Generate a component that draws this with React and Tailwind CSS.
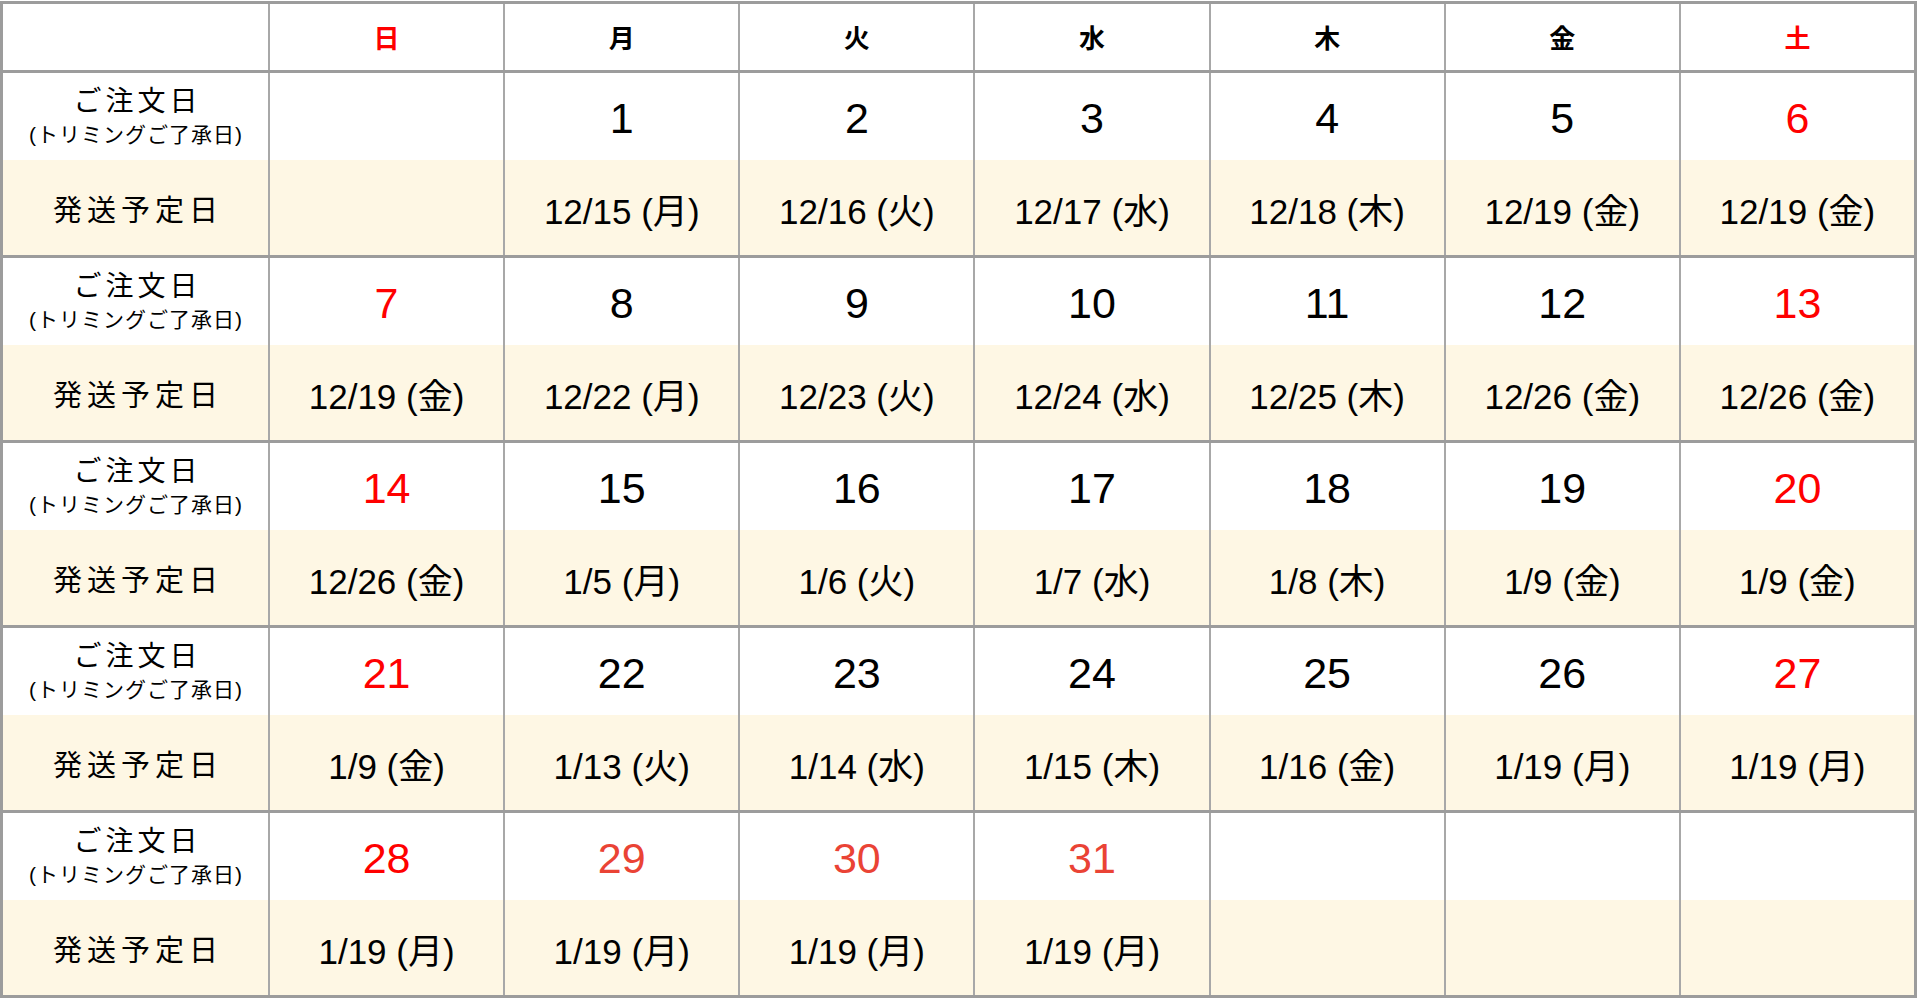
const DAYS = ["日", "月", "火", "水", "木", "金", "土"];

const WEEKS = [
  {
    days: [null, 1, 2, 3, 4, 5, 6],
    ship: [null, "12/15", "12/16", "12/17", "12/18", "12/19", "12/19"],
    wd: [null, "月", "火", "水", "木", "金", "金"],
  },
  {
    days: [7, 8, 9, 10, 11, 12, 13],
    ship: ["12/19", "12/22", "12/23", "12/24", "12/25", "12/26", "12/26"],
    wd: ["金", "月", "火", "水", "木", "金", "金"],
  },
  {
    days: [14, 15, 16, 17, 18, 19, 20],
    ship: ["12/26", "1/5", "1/6", "1/7", "1/8", "1/9", "1/9"],
    wd: ["金", "月", "火", "水", "木", "金", "金"],
  },
  {
    days: [21, 22, 23, 24, 25, 26, 27],
    ship: ["1/9", "1/13", "1/14", "1/15", "1/16", "1/19", "1/19"],
    wd: ["金", "火", "水", "木", "金", "月", "月"],
  },
  {
    days: [28, 29, 30, 31, null, null, null],
    ship: ["1/19", "1/19", "1/19", "1/19", null, null, null],
    wd: ["月", "月", "月", "月", null, null, null],
  },
];

// 29〜31 are holidays, drawn in a softer red
const HOLIDAYS = [29, 30, 31];

const font = "font-['Liberation_Sans','Noto_Sans_CJK_JP',sans-serif]";

function dayColor(day, i) {
  if (HOLIDAYS.includes(day)) return "text-[#ea4335]";
  if (i === 0 || i === 6) return "text-[#ff0000]";
  return "text-black";
}

function LabelCell() {
  return (
    <div className="flex flex-col">
      <div className="h-[87px] bg-white flex flex-col items-center justify-center pt-[4px]">
        <span className="text-[28px] leading-[32px] tracking-[4px] pl-[4px]">ご注文日</span>
        <span className="text-[21px] leading-[34px] tracking-[1px] pl-[1px]">(トリミングご了承日)</span>
      </div>
      <div className="h-[95px] bg-[#fef7e4] flex items-center justify-center pt-[9px]">
        <span className="text-[29px] tracking-[5px] pl-[5px]">発送予定日</span>
      </div>
    </div>
  );
}

function DayCell({ day, ship, wd, i }) {
  return (
    <div className="flex flex-col border-l-2 border-[#a8a8a8]">
      <div className="h-[87px] bg-white flex items-center justify-center pt-[4px]">
        {day && <span className={`text-[43px] ${dayColor(day, i)}`}>{day}</span>}
      </div>
      <div className="h-[95px] bg-[#fef7e4] flex items-center justify-center pt-[9px]">
        {ship && (
          <span className="text-[35px]">
            {ship} ({wd})
          </span>
        )}
      </div>
    </div>
  );
}

export default function App() {
  return (
    <div className={`bg-white w-[1920px] h-[999px] pt-[1px] overflow-hidden ${font}`}>
      <div className="w-[1917px] border-[3px] border-[#9c9c9c] text-black">
        <div className="grid grid-cols-[265px_repeat(7,minmax(0,1fr))] h-[69px] border-b-[3px] border-[#9c9c9c]">
          <div className="bg-white" />
          {DAYS.map((d, i) => (
            <div
              key={d}
              className={`flex items-center justify-center pt-[5px] border-l-2 border-[#a8a8a8] text-[26px] font-bold ${
                i === 0 || i === 6 ? "text-[#ff0000]" : "text-black"
              }`}
            >
              {d}
            </div>
          ))}
        </div>
        {WEEKS.map((w, wi) => (
          <div
            key={wi}
            className={`grid grid-cols-[265px_repeat(7,minmax(0,1fr))] ${
              wi < WEEKS.length - 1 ? "border-b-[3px] border-[#9c9c9c]" : ""
            }`}
          >
            <LabelCell />
            {w.days.map((day, i) => (
              <DayCell key={i} day={day} ship={w.ship[i]} wd={w.wd[i]} i={i} />
            ))}
          </div>
        ))}
      </div>
    </div>
  );
}
